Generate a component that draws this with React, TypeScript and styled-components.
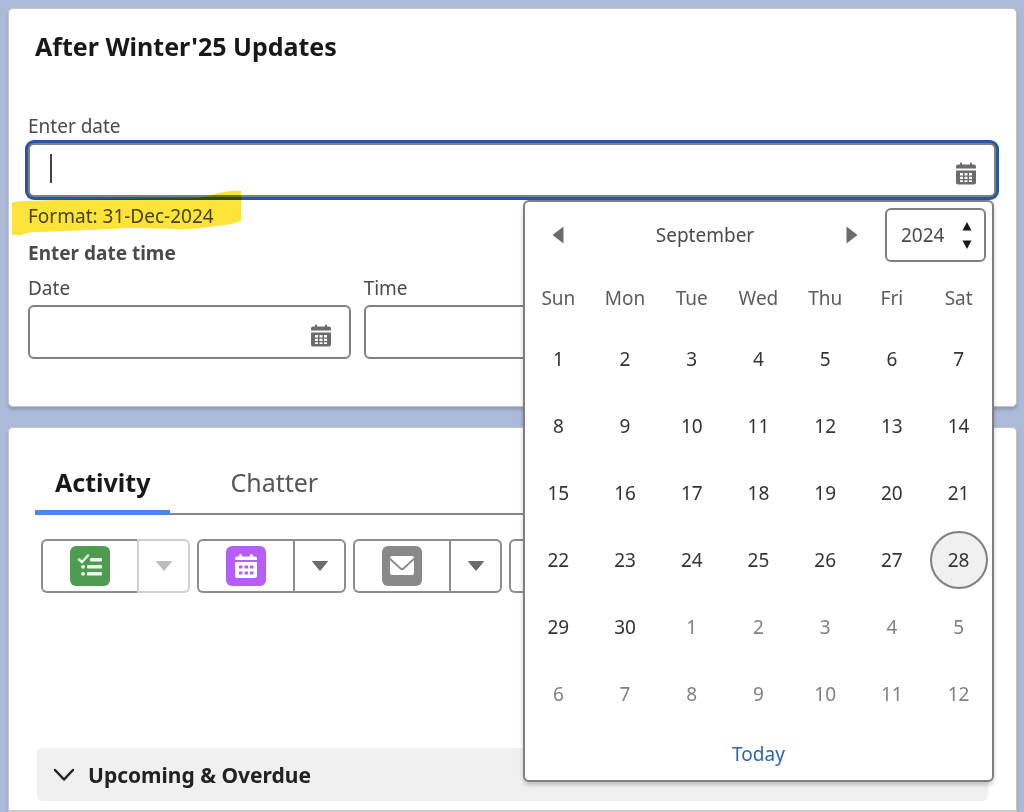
import React from 'react';
import styled, { createGlobalStyle } from 'styled-components';

const Global = createGlobalStyle`
  *, *::before, *::after { box-sizing: border-box; }
  body {
    margin: 0;
    background: #abbad8;
    color: #4a4a4a;
    font-family: "Noto Sans", "Open Sans", sans-serif;
    font-size: 19px;
    line-height: 24px;
  }
  button, input, select { font: inherit; color: inherit; margin: 0; }
  button { cursor: pointer; }
`;

const Page = styled.main`
  display: flex;
  flex-direction: column;
  gap: 20px;
  min-height: 100vh;
  padding: 8px 7px 0 8px;
`;

const Card = styled.section`
  border: 1px solid #c4c4c6;
  border-radius: 5px;
  background: #fff;
  box-shadow: 0 3px 3px rgba(60, 70, 100, 0.25);
`;

const FormCard = styled(Card)`
  padding: 25px 20px 47px 19px;
`;

const ActivityCard = styled(Card)`
  flex: 1;
  padding: 42px 28px 8px 26px;
  border-bottom: 2px solid #c8c8c8;
  border-radius: 5px 5px 0 0;
`;

const Title = styled.h2`
  margin: 0 7px 56px;
  color: #181818;
  font-size: 25px;
  line-height: 24px;
`;

const Label = styled.label`
  display: block;
  margin-bottom: 5px;
`;

const Legend = styled.legend`
  padding: 0;
  margin-bottom: 11px;
  font-weight: 700;
`;

const Fieldset = styled.fieldset`
  min-width: 0;
  margin: 13px 0 0;
  padding: 0;
  border: 0;
`;

const Field = styled.div`
  position: relative;
`;

const InputBox = styled.div<{ $active?: boolean }>`
  position: relative;
  display: flex;
  align-items: center;
  height: 54px;
  border: 2px solid #808080;
  border-radius: 6px;
  background: #fff;
  box-shadow: ${(p) => (p.$active ? '0 0 0 3px #2856a0' : 'none')};
`;

const TextInput = styled.input`
  flex: 1;
  width: 0;
  min-width: 0;
  height: 100%;
  padding: 0 20px;
  border: 0;
  border-radius: 6px;
  outline: 0;
  background: transparent;
  caret-color: transparent;
`;

const Caret = styled.span`
  position: absolute;
  top: 9px;
  left: 20px;
  width: 2px;
  height: 29px;
  background: #444;
`;

const PickButton = styled.button`
  display: flex;
  padding: 6px 18px 0 0;
  border: 0;
  background: none;
  color: #6b6b6b;
`;

const Hint = styled.p`
  position: relative;
  margin: 7px 0 0;
`;

const Highlighter = styled.svg`
  position: absolute;
  top: -14px;
  left: -16px;
  z-index: 1;
  mix-blend-mode: multiply;
  pointer-events: none;
`;

const TimeRow = styled.div`
  display: flex;
  gap: 13px;
`;

const TimeColumn = styled.div`
  flex: 0 0 33.33%;
  min-width: 0;
`;

const Popup = styled.div`
  position: absolute;
  top: 100%;
  right: 2px;
  z-index: 2;
  width: 471px;
  margin-top: 3px;
  padding-top: 6px;
  border: 2px solid #808080;
  border-radius: 6px;
  background: #fff;
  box-shadow: 0 3px 4px rgba(0, 0, 0, 0.2);
`;

const PopupHead = styled.div`
  display: flex;
  align-items: center;
  padding-right: 6px;
`;

const MonthNav = styled.div`
  flex: 1;
  display: flex;
  align-items: center;
  justify-content: space-between;
  padding: 0 13px;
`;

const NavButton = styled.button`
  display: flex;
  justify-content: center;
  width: 40px;
  padding: 0;
  border: 0;
  background: none;
  color: #6b6b6b;
`;

const YearBox = styled.div`
  position: relative;
  width: 101px;
  height: 54px;

  svg {
    position: absolute;
    top: 14px;
    right: 14px;
    pointer-events: none;
  }
`;

const YearSelect = styled.select`
  width: 100%;
  height: 100%;
  padding: 0 14px;
  border: 2px solid #808080;
  border-radius: 6px;
  background: #fff;
  appearance: none;
`;

const Days = styled.table`
  width: 100%;
  table-layout: fixed;
  border-collapse: collapse;
  text-align: center;

  th {
    height: 63px;
    padding: 8px 0 0;
    color: #5c5c5c;
    font-weight: 400;
  }

  td {
    height: 67px;
    padding: 0;
  }
`;

const Day = styled.button<{ $muted: boolean; $today: boolean }>`
  width: 58px;
  height: 58px;
  padding: 0;
  border: 2px solid ${(p) => (p.$today ? '#808080' : 'transparent')};
  border-radius: 50%;
  background: ${(p) => (p.$today ? '#f0f0f0' : 'none')};
  color: ${(p) => (p.$muted ? '#808080' : '#333')};
`;

const TodayButton = styled.button`
  display: block;
  margin: 15px auto 14px;
  padding: 0;
  border: 0;
  background: none;
  color: #2f63b0;
`;

const Tabs = styled.div`
  display: flex;
  gap: 40px;
  border-bottom: 2px solid #868686;
`;

const Tab = styled.button<{ $on?: boolean }>`
  height: 45px;
  margin-bottom: -2px;
  padding: 0 20px 16px;
  border: 0;
  border-bottom: 5px solid ${(p) => (p.$on ? '#4a86f2' : 'transparent')};
  background: none;
  color: ${(p) => (p.$on ? '#181818' : '#555')};
  font-size: 25px;
  line-height: 24px;
  font-weight: ${(p) => (p.$on ? 700 : 400)};
`;

const Actions = styled.div`
  display: flex;
  gap: 7px;
  margin: 24px 6px 155px;
`;

const Split = styled.div`
  display: flex;
  width: 149px;
  height: 54px;
`;

const MainAction = styled.button`
  display: flex;
  align-items: center;
  justify-content: center;
  width: 96px;
  padding: 0;
  border: 2px solid #8c8c8c;
  border-right: 0;
  border-radius: 6px 0 0 6px;
  background: #fff;
`;

const MenuAction = styled.button`
  display: flex;
  align-items: center;
  justify-content: center;
  width: 53px;
  padding: 0;
  border: 2px solid #8c8c8c;
  border-radius: 0 6px 6px 0;
  background: #fff;
  color: #6b6b6b;

  &:disabled {
    border-color: #cfcfcf;
    color: #bdbdbd;
  }
`;

const Tile = styled.span<{ $color: string }>`
  display: flex;
  align-items: center;
  justify-content: center;
  width: 40px;
  height: 40px;
  border-radius: 6px;
  background: ${(p) => p.$color};
`;

const SectionToggle = styled.button`
  display: flex;
  align-items: center;
  gap: 14px;
  width: 100%;
  height: 53px;
  padding: 0 17px;
  border: 0;
  border-radius: 5px;
  background: #f0f0f0;
  color: #222;
  font-size: 21px;
  font-weight: 700;
`;

const SectionWrap = styled.div`
  padding: 0 0 0 2px;
`;

const CalendarIcon = () => (
  <svg width="20" height="23" viewBox="0 0 20 23" fill="currentColor" aria-hidden="true">
    <path d="M0 6.500V4.500Q0 2.500 2 2.500H4V1.500Q4 .5 5 .5T6 1.500V2.500H14V1.500Q14 .5 15 .5T16 1.500V2.500H18Q20 2.500 20 4.500V6.500Z" />
    <path fillRule="evenodd" d="M0 8.500H20V20.500Q20 22.500 18 22.500H2Q0 22.500 0 20.500ZM4 11V13.500H7V11ZM8.500 11V13.500H11.500V11ZM13 11V13.500H16V11ZM4 14.700V17H7V14.700ZM8.500 14.700V17H11.500V14.700ZM13 14.700V17H16V14.700ZM4 18.200V20H7V18.200ZM8.500 18.200V20H11.500V18.200ZM13 18.200V20H16V18.200Z" />
  </svg>
);

const TaskIcon = () => (
  <svg width="26" height="24" viewBox="0 0 26 24" fill="#edf7ed" aria-hidden="true">
    <path d="M2 5.500L5 8L11 1.500" fill="none" stroke="#edf7ed" strokeWidth="2.400" strokeLinecap="round" />
    <rect x="13" y="4" width="12" height="3.600" rx="1" />
    <rect x="10" y="11" width="15" height="3.600" rx="1" />
    <rect x="10" y="18" width="15" height="3.600" rx="1" />
    <circle cx="6" cy="12.800" r="1.900" />
    <circle cx="6" cy="19.800" r="1.900" />
  </svg>
);

const EventIcon = () => (
  <svg width="24" height="26" viewBox="0 0 24 26" fill="#fff" aria-hidden="true">
    <path d="M1 7V5.500Q1 3.500 3 3.500H5V2.500Q5 1 6.500 1T8 2.500V3.500H16V2.500Q16 1 17.500 1T19 2.500V3.500H21Q23 3.500 23 5.500V7Z" />
    <path fillRule="evenodd" d="M1 9H23V22.500Q23 25 20.500 25H3.500Q1 25 1 22.500ZM5 12.500V15.500H8.500V12.500ZM10.500 12.500V15.500H14V12.500ZM16 12.500V15.500H19.500V12.500ZM5 18.500V21.500H8.500V18.500ZM10.500 18.500V21.500H14V18.500ZM16 18.500V21.500H19.500V18.500Z" />
  </svg>
);

const MailIcon = () => (
  <svg width="26" height="22" viewBox="0 0 26 22" aria-hidden="true">
    <rect x="1" y="1" width="24" height="19" rx="2" fill="#fff" />
    <path d="M0 3L11.500 13.500Q13 15 14.500 13.500L26 3" fill="none" stroke="#898989" strokeWidth="1.800" />
  </svg>
);

const DownTriangle = () => (
  <svg width="16" height="10" viewBox="0 0 16 10" aria-hidden="true">
    <path d="M.5 .5H15.500L8 9.500Z" fill="currentColor" stroke="currentColor" strokeLinejoin="round" />
  </svg>
);

const ACTIONS = [
  { name: 'New task', color: '#4f9c51', icon: <TaskIcon />, disabled: true },
  { name: 'New event', color: '#b55ff8', icon: <EventIcon />, disabled: false },
  { name: 'Email', color: '#898989', icon: <MailIcon />, disabled: false },
  { name: 'Log a call', color: '#4f9c51', icon: null, disabled: false },
];

const WEEKDAYS = ['Sun', 'Mon', 'Tue', 'Wed', 'Thu', 'Fri', 'Sat'];
const WEEKS = Array.from({ length: 6 }, (_, w) =>
  Array.from({ length: 7 }, (_, d) => {
    const n = w * 7 + d + 1;
    return { date: n > 30 ? n - 30 : n, muted: n > 30, today: n === 28 };
  }),
);

const DatePicker = () => (
  <Popup role="dialog" aria-label="Date picker">
    <PopupHead>
      <MonthNav>
        <NavButton aria-label="Previous month">
          <svg width="12" height="18" viewBox="0 0 12 18" fill="currentColor"><path d="M11.500 .5V17.500L.5 9Z" /></svg>
        </NavButton>
        <span>September</span>
        <NavButton aria-label="Next month">
          <svg width="12" height="18" viewBox="0 0 12 18" fill="currentColor"><path d="M.5 .5V17.500L11.500 9Z" /></svg>
        </NavButton>
      </MonthNav>
      <YearBox>
        <YearSelect aria-label="Year" defaultValue="2024">
          <option>2024</option>
        </YearSelect>
        <svg width="10" height="27" viewBox="0 0 10 27" fill="#181818" aria-hidden="true">
          <path d="M5 0L9.500 8.500H.5ZM.5 18.500H9.500L5 27Z" />
        </svg>
      </YearBox>
    </PopupHead>
    <Days>
      <thead>
        <tr>{WEEKDAYS.map((d) => <th key={d} scope="col">{d}</th>)}</tr>
      </thead>
      <tbody>
        {WEEKS.map((week, i) => (
          <tr key={i}>
            {week.map((day) => (
              <td key={day.date}>
                <Day $muted={day.muted} $today={day.today}>{day.date}</Day>
              </td>
            ))}
          </tr>
        ))}
      </tbody>
    </Days>
    <TodayButton>Today</TodayButton>
  </Popup>
);

export default function App() {
  return (
    <>
      <Global />
      <Page>
        <FormCard>
          <Title>After Winter'25 Updates</Title>
          <Label htmlFor="enter-date">Enter date</Label>
          <Field>
            <InputBox $active>
              <TextInput id="enter-date" type="text" />
              <Caret />
              <PickButton aria-label="Select a date"><CalendarIcon /></PickButton>
            </InputBox>
            <DatePicker />
          </Field>
          <Hint>
            Format: 31-Dec-2024
            <Highlighter width="230" height="46" viewBox="0 0 230 46" aria-hidden="true">
              <path fill="#fbe33a" d="M0 13Q3 11 14 11L75 9L186 8Q198 6 207 3Q219 0 229 1V31Q218 35 204 36Q188 39 170 39L115 38Q60 41 22 42Q12 43 10 45H0Z" />
            </Highlighter>
          </Hint>
          <Fieldset>
            <Legend>Enter date time</Legend>
            <TimeRow>
              <TimeColumn>
                <Label htmlFor="date-part">Date</Label>
                <InputBox>
                  <TextInput id="date-part" type="text" />
                  <PickButton aria-label="Select a date"><CalendarIcon /></PickButton>
                </InputBox>
              </TimeColumn>
              <TimeColumn>
                <Label htmlFor="time-part">Time</Label>
                <InputBox><TextInput id="time-part" type="text" /></InputBox>
              </TimeColumn>
            </TimeRow>
          </Fieldset>
        </FormCard>
        <ActivityCard>
          <Tabs role="tablist">
            <Tab role="tab" aria-selected $on>Activity</Tab>
            <Tab role="tab" aria-selected={false}>Chatter</Tab>
          </Tabs>
          <Actions>
            {ACTIONS.map((a) => (
              <Split key={a.name}>
                <MainAction aria-label={a.name}>
                  <Tile $color={a.color}>{a.icon}</Tile>
                </MainAction>
                <MenuAction aria-label={`${a.name} options`} disabled={a.disabled}>
                  <DownTriangle />
                </MenuAction>
              </Split>
            ))}
          </Actions>
          <SectionWrap>
            <SectionToggle aria-expanded>
              <svg width="20" height="14" viewBox="0 0 20 14" aria-hidden="true">
                <path d="M1 2L10 11.500L19 2" fill="none" stroke="currentColor" strokeWidth="2.500" strokeLinecap="round" strokeLinejoin="round" />
              </svg>
              Upcoming &amp; Overdue
            </SectionToggle>
          </SectionWrap>
        </ActivityCard>
      </Page>
    </>
  );
}
